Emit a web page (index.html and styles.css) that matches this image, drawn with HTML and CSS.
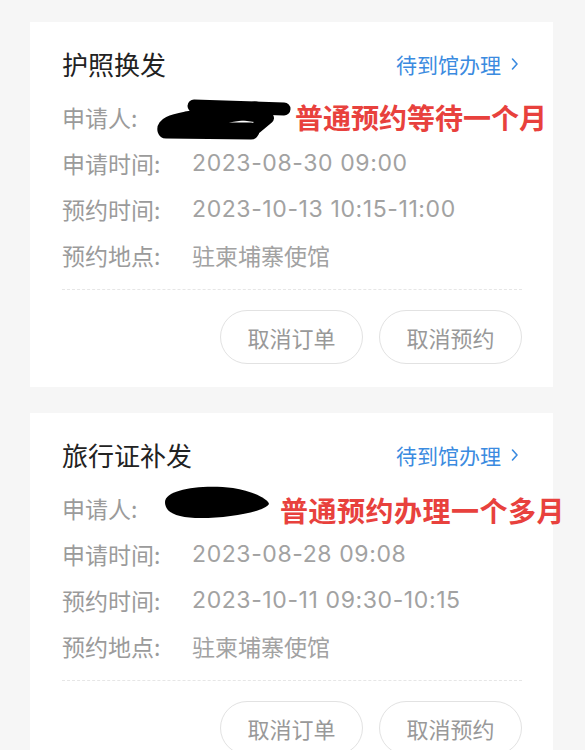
FILE: index.html
```html
<!DOCTYPE html>
<html lang="zh-CN">
<head>
<meta charset="utf-8">
<title>预约订单</title>
<link rel="stylesheet" href="styles.css">
</head>
<body>
<div class="list">
  <div class="card">
    <div class="head">
      <div class="title">护照换发</div>
      <div class="status">待到馆办理<svg class="chev" width="8" height="14" viewBox="0 0 8 14"><polyline points="1.5,2 6,7 1.5,12" fill="none" stroke="#3b8be0" stroke-width="1.6" stroke-linecap="round" stroke-linejoin="round"/></svg></div>
    </div>
    <div class="rows">
      <div class="row">
        <span class="label">申请人:</span><span class="value"></span>
        <svg class="scribble s1" width="136" height="44" viewBox="0 0 136 44"><path d="M38 8 L128 11" stroke="#000" stroke-width="13" stroke-linecap="round" fill="none"/><path d="M100 12 Q60 18 30 22 Q8 26 10 32 L95 33" stroke="#000" stroke-width="17" stroke-linecap="round" stroke-linejoin="round" fill="none"/><path d="M70 14 L112 20 L100 30" stroke="#000" stroke-width="12" stroke-linecap="round" stroke-linejoin="round" fill="none"/></svg>
        <span class="note n1">普通预约等待一个月</span>
      </div>
      <div class="row"><span class="label">申请时间:</span><span class="value num">2023-08-30 09:00</span></div>
      <div class="row"><span class="label">预约时间:</span><span class="value num">2023-10-13 10:15-11:00</span></div>
      <div class="row"><span class="label">预约地点:</span><span class="value">驻柬埔寨使馆</span></div>
    </div>
    <div class="divider"></div>
    <div class="actions">
      <button class="btn">取消订单</button>
      <button class="btn">取消预约</button>
    </div>
  </div>

  <div class="card">
    <div class="head">
      <div class="title">旅行证补发</div>
      <div class="status">待到馆办理<svg class="chev" width="8" height="14" viewBox="0 0 8 14"><polyline points="1.5,2 6,7 1.5,12" fill="none" stroke="#3b8be0" stroke-width="1.6" stroke-linecap="round" stroke-linejoin="round"/></svg></div>
    </div>
    <div class="rows">
      <div class="row">
        <span class="label">申请人:</span><span class="value"></span>
        <svg class="scribble s2" width="108" height="38" viewBox="0 0 108 38"><path d="M2 19 C2 6 40 1 70 5 C90 8 105 16 106 21 C102 29 62 36 32 35 C12 34 2 29 2 19 Z" fill="#000"/></svg>
        <span class="note n2">普通预约办理一个多月</span>
      </div>
      <div class="row"><span class="label">申请时间:</span><span class="value num">2023-08-28 09:08</span></div>
      <div class="row"><span class="label">预约时间:</span><span class="value num">2023-10-11 09:30-10:15</span></div>
      <div class="row"><span class="label">预约地点:</span><span class="value">驻柬埔寨使馆</span></div>
    </div>
    <div class="divider"></div>
    <div class="actions">
      <button class="btn">取消订单</button>
      <button class="btn">取消预约</button>
    </div>
  </div>
</div>
</body>
</html>
```

FILE: styles.css
```css
html, body {
  margin: 0;
  padding: 0;
}
body {
  background: #f6f6f6;
  font-family: "Noto Sans CJK SC", sans-serif;
  width: 585px;
  overflow: hidden;
}
.list {
  display: flex;
  flex-direction: column;
  gap: 26px;
  padding-top: 22px;
}
.card {
  background: #fff;
  margin: 0 32px 0 30px;
  padding: 26px 31px 23px 32px;
}
.head {
  display: flex;
  justify-content: space-between;
  align-items: center;
  height: 32px;
  margin-bottom: 14px;
}
.title {
  font-size: 26px;
  color: #222;
  line-height: 32px;
}
.status {
  display: flex;
  align-items: center;
  gap: 10px;
  font-size: 21px;
  color: #3b8be0;
  margin-right: 3px;
}
.chev {
  display: block;
}
.rows {
  display: flex;
  flex-direction: column;
}
.row {
  position: relative;
  display: flex;
  align-items: center;
  height: 46px;
  font-size: 23px;
  color: #9b9b9b;
}
.label {
  width: 130px;
  flex: none;
}
.value {
  color: #a2a2a2;
}
.num {
  font-family: "Inter", "Noto Sans CJK SC", sans-serif;
  font-size: 23px;
  letter-spacing: 0.6px;
}
.scribble {
  position: absolute;
}
.s1 {
  left: 94px;
  top: 4px;
}
.s2 {
  left: 101px;
  top: -2px;
}
.note {
  position: absolute;
  font-size: 28px;
  font-weight: 700;
  color: #e8413d;
  line-height: 46px;
  top: 0;
  white-space: nowrap;
}
.n1 {
  left: 233px;
}
.n2 {
  left: 218px;
  top: 2px;
  letter-spacing: 0.5px;
}
.divider {
  margin-top: 11px;
  border-top: 1px dashed #e6e6e6;
}
.actions {
  display: flex;
  justify-content: flex-end;
  gap: 16px;
  margin-top: 20px;
}
.btn {
  width: 143px;
  height: 54px;
  border: 1.5px solid #e2e2e2;
  border-radius: 27px;
  background: #fff;
  font-family: "Noto Sans CJK SC", sans-serif;
  font-size: 22px;
  color: #999;
  padding: 0;
}
```
